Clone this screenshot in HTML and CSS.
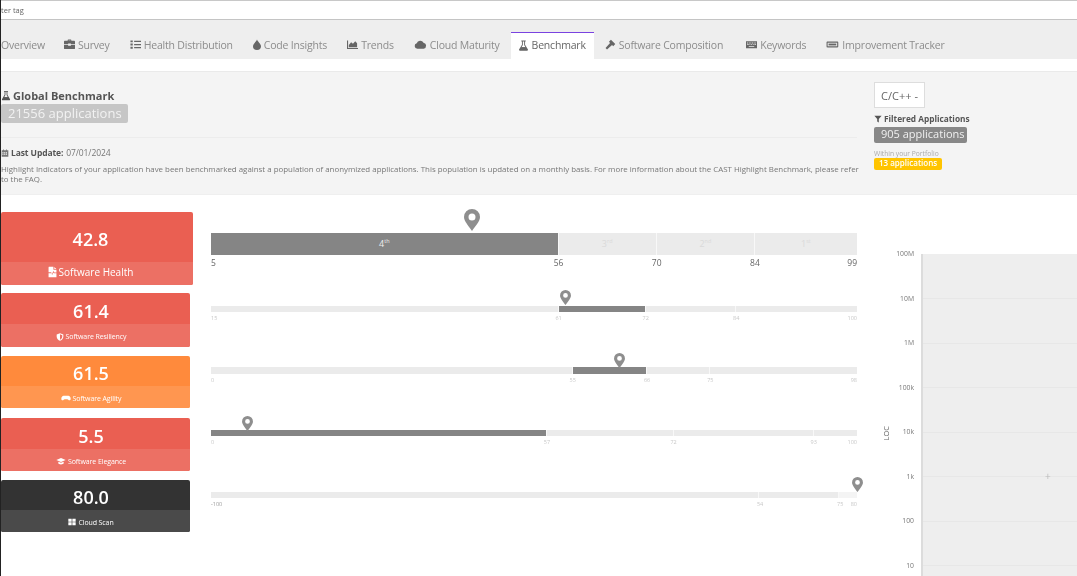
FILE: index.html
```html
<!DOCTYPE html>
<html lang="en">
<head>
<meta charset="utf-8">
<title>Benchmark</title>
<link rel="stylesheet" href="styles.css">
</head>
<body>
<svg class="defs" width="0" height="0" aria-hidden="true">
  <symbol id="i-flask" viewBox="0 0 12 12"><path d="M3.6 .6h4.8v1H7.7v3.6l3 5a1 1 0 0 1-.9 1.6H2.2a1 1 0 0 1-.9-1.6l3-5V1.600H3.600z M5.300 1.600v3.900L3.800 8h4.400L6.700 5.500V1.600z" fill-rule="evenodd"/><path d="M3.800 8h4.400l1.800 3H2z"/></symbol>
  <symbol id="i-case" viewBox="0 0 12 12"><path d="M4 2V1.300C4 .9 4.300 .6 4.700 .6h2.600C7.700 .6 8 .9 8 1.300V2h3c.5 0 1 .4 1 1v2.500H7.500V5h-3v.5H0V3c0-.6.500-1 1-1zM5 2h2v-.5H5zM0 6.300h4.500v1h3v-1H12V10c0 .6-.5 1-1 1H1c-.5 0-1-.4-1-1z"/></symbol>
  <symbol id="i-tasks" viewBox="0 0 12 12"><path d="M4.500 2h7.500v1.300H4.500zM4.500 5.400h7.500v1.300H4.500zM4.500 8.800h7.500v1.300H4.500zM.5 1.500h2.500v2H.5zM.5 5h2.500v2H.5zM.5 8.500h2.500v2H.5z"/></symbol>
  <symbol id="i-drop" viewBox="0 0 9 12"><path d="M4.500 .3C5 2.500 9 5 9 8a4.500 4.100 0 0 1-9 0C0 5 4 2.500 4.500 .3z"/></symbol>
  <symbol id="i-chart" viewBox="0 0 12 12"><path d="M0 1.500h1.200v8.300H12V11H0z"/><path d="M2 9l0-2.500 2.500-3 2 1.800L9 2.500l2 2v4.500z"/></symbol>
  <symbol id="i-cloud" viewBox="0 0 13 12"><path d="M3 10.500a3 3 0 0 1-.6-5.900A4 4 0 0 1 9.800 4 3.300 3.300 0 0 1 10 10.500z"/></symbol>
  <symbol id="i-gavel" viewBox="0 0 12 12"><path d="M6.500 .8l4.700 4.700-2.300 2.300-1.200-1.200L2.200 11.500.6 9.900l4.900-5.500-1.200-1.300z"/></symbol>
  <symbol id="i-key" viewBox="0 0 12 12"><path fill-rule="evenodd" d="M0 2.500h12v7.500H0zM1.200 3.800v1h1v-1zM3 3.800v1h1v-1zM4.800 3.800v1h1v-1zM6.600 3.800v1h1v-1zM8.400 3.800v1h1v-1zM10.200 3.800v1h.7v-1zM1.200 5.600v1h1.800v-1zM3.800 5.600v1h1v-1zM5.600 5.600v1h1v-1zM7.400 5.600v1h1v-1zM9.200 5.600v1h1.700v-1zM3 7.500v1h6v-1z"/></symbol>
  <symbol id="i-batt" viewBox="0 0 13 12"><path fill-rule="evenodd" d="M1 2.800h10.800c.5 0 1 .5 1 1v4.400c0 .5-.5 1-1 1H1c-.5 0-1-.5-1-1V3.800c0-.5.5-1 1-1zM1.200 4v4h10.400V4z"/><path d="M2.200 5h8.400v2H2.200z"/></symbol>
  <symbol id="i-cal" viewBox="0 0 12 12"><path fill-rule="evenodd" d="M1 2h2V.6h1.300V2h3.400V.6H9V2h2v9.500H1zM2 5v1.300h1.800V5zM4.600 5v1.300h1.800V5zM7.300 5v1.300H9V5zM2 7.200v1.300h1.800V7.200zM4.600 7.200v1.300h1.800V7.200zM7.300 7.200v1.300H9V7.200z"/></symbol>
  <symbol id="i-filter" viewBox="0 0 12 12"><path d="M.6 1h10.800L7.200 6v5.400L4.800 9.600V6z"/></symbol>
  <symbol id="i-file" viewBox="0 0 12 12"><path d="M2 .3h5v3.300h3.300v3H8L7 5 5.500 8.300 4.500 6.300H1.700V1zM8 .5l2.200 2.300H8zM1.700 7.300h3.300l.5 2 1.600-2.700.5.700h2.700V11.700H1.700z"/></symbol>
  <symbol id="i-shield" viewBox="0 0 12 12"><path fill-rule="evenodd" d="M6 .3l5 2v3c0 3-2.500 5.500-5 6.400C3.500 10.800 1 8.300 1 5.300v-3zM6 2v8.200c1.800-.8 3.400-2.700 3.400-4.900V3.400z"/></symbol>
  <symbol id="i-car" viewBox="0 0 14 12"><path d="M3.500 2.500h7c2 0 3.500 2 3.500 4.500 0 1.500-.7 2.500-1.800 2.500-1.500 0-2-1.800-3.200-1.800H5c-1.200 0-1.700 1.800-3.200 1.800C.7 9.500 0 8.500 0 7c0-2.500 1.500-4.500 3.500-4.500z"/></symbol>
  <symbol id="i-cap" viewBox="0 0 14 12"><path d="M7 1.500l7 3-7 3-7-3z"/><path d="M3 7l4 1.700L11 7v2.500c0 1-2 1.700-4 1.700s-4-.7-4-1.700z"/></symbol>
  <symbol id="i-grid" viewBox="0 0 12 12"><path d="M.5 1h5v4.500h-5zM6.500 1h5v4.500h-5zM.5 6.500h5V11h-5zM6.500 6.500h5V11h-5z"/></symbol>
  <symbol id="i-pin" viewBox="0 0 16 22"><path fill-rule="evenodd" d="M8 0a8 8 0 0 1 8 8c0 4.500-5 9.500-8 14C5 17.500 0 12.500 0 8a8 8 0 0 1 8-8zM8 4.500a3.500 3.500 0 1 0 0 7 3.500 3.500 0 0 0 0-7z"/></symbol>
</svg>

<div class="search">ter tag</div>

<nav class="tabs">
  <a class="tab tab-first">Overview</a>
  <a class="tab"><svg class="ico"><use href="#i-case"/></svg>Survey</a>
  <a class="tab"><svg class="ico"><use href="#i-tasks"/></svg>Health Distribution</a>
  <a class="tab"><svg class="ico ico-narrow"><use href="#i-drop"/></svg>Code Insights</a>
  <a class="tab"><svg class="ico"><use href="#i-chart"/></svg>Trends</a>
  <a class="tab"><svg class="ico ico-wide"><use href="#i-cloud"/></svg>Cloud Maturity</a>
  <a class="tab tab-active"><svg class="ico"><use href="#i-flask"/></svg>Benchmark</a>
  <a class="tab tab-comp"><svg class="ico"><use href="#i-gavel"/></svg>Software Composition</a>
  <a class="tab"><svg class="ico"><use href="#i-key"/></svg>Keywords</a>
  <a class="tab"><svg class="ico ico-wide"><use href="#i-batt"/></svg>Improvement Tracker</a>
</nav>

<header class="panel">
  <div class="panel-main">
    <div class="panel-top">
      <h1 class="title"><svg class="ico-title"><use href="#i-flask"/></svg>Global Benchmark</h1>
      <span class="badge-global">21556 applications</span>
    </div>
    <p class="update"><svg class="ico-small"><use href="#i-cal"/></svg><b>Last Update:</b> 07/01/2024</p>
    <p class="desc">Highlight Indicators of your application have been benchmarked against a population of anonymized applications. This population is updated on a monthly basis. For more information about the CAST Highlight Benchmark, please refer to the FAQ.</p>
  </div>
  <aside class="panel-side">
    <button class="lang">C/C++ -</button>
    <p class="filtered"><svg class="ico-small"><use href="#i-filter"/></svg>Filtered Applications</p>
    <span class="badge-filtered">905 applications</span>
    <p class="within">Within your Portfolio</p>
    <span class="badge-portfolio">13 applications</span>
  </aside>
</header>

<main class="content">
  <section class="cards">
    <article class="card card-main red">
      <div class="card-value">42.8</div>
      <div class="card-label"><svg class="ico-card"><use href="#i-file"/></svg>Software Health</div>
    </article>
    <article class="card card-res red">
      <div class="card-value">61.4</div>
      <div class="card-label"><svg class="ico-small"><use href="#i-shield"/></svg>Software Resiliency</div>
    </article>
    <article class="card card-agi orange">
      <div class="card-value">61.5</div>
      <div class="card-label"><svg class="ico-small ico-w"><use href="#i-car"/></svg>Software Agility</div>
    </article>
    <article class="card card-ele red">
      <div class="card-value">5.5</div>
      <div class="card-label"><svg class="ico-small ico-w"><use href="#i-cap"/></svg>Software Elegance</div>
    </article>
    <article class="card dark">
      <div class="card-value">80.0</div>
      <div class="card-label"><svg class="ico-small"><use href="#i-grid"/></svg>Cloud Scan</div>
    </article>
  </section>

  <section class="gauges">
    <div class="gauge gauge-main">
      <svg class="pin pin-big" style="left:40.35%"><use href="#i-pin"/></svg>
      <div class="bar bar-big">
        <div class="seg on" style="width:53.8%">4<sup>th</sup></div>
        <div class="seg" style="width:15.2%">3<sup>rd</sup></div>
        <div class="seg" style="width:15.2%">2<sup>nd</sup></div>
        <div class="seg" style="width:15.8%">1<sup>st</sup></div>
      </div>
      <div class="axis axis-big">
        <span class="start" style="left:0">5</span>
        <span style="left:53.8%">56</span>
        <span style="left:69%">70</span>
        <span style="left:84.2%">84</span>
        <span class="end" style="left:100%">99</span>
      </div>
    </div>

    <div class="gauge g-res">
      <svg class="pin" style="left:54.9%"><use href="#i-pin"/></svg>
      <div class="bar">
        <div class="seg" style="width:53.8%"></div>
        <div class="seg on" style="width:13.5%"></div>
        <div class="seg" style="width:14%"></div>
        <div class="seg" style="width:18.7%"></div>
      </div>
      <div class="axis">
        <span class="start" style="left:0">15</span>
        <span style="left:53.800%">61</span>
        <span style="left:67.3%">72</span>
        <span style="left:81.3%">84</span>
        <span class="end" style="left:100%">100</span>
      </div>
    </div>

    <div class="gauge g-agi">
      <svg class="pin" style="left:63.2%"><use href="#i-pin"/></svg>
      <div class="bar bar-mid">
        <div class="seg" style="width:56%"></div>
        <div class="seg on" style="width:11.5%"></div>
        <div class="seg" style="width:9.800%"></div>
        <div class="seg" style="width:22.7%"></div>
      </div>
      <div class="axis">
        <span class="start" style="left:0">0</span>
        <span style="left:56%">55</span>
        <span style="left:67.500%">66</span>
        <span style="left:77.3%">75</span>
        <span class="end" style="left:100%">98</span>
      </div>
    </div>

    <div class="gauge g-ele">
      <svg class="pin" style="left:5.6%"><use href="#i-pin"/></svg>
      <div class="bar">
        <div class="seg on" style="width:52%"></div>
        <div class="seg" style="width:19.6%"></div>
        <div class="seg" style="width:21.7%"></div>
        <div class="seg" style="width:6.7%"></div>
      </div>
      <div class="axis">
        <span class="start" style="left:0">0</span>
        <span style="left:52%">57</span>
        <span style="left:71.6%">72</span>
        <span style="left:93.3%">93</span>
        <span class="end" style="left:100%">100</span>
      </div>
    </div>

    <div class="gauge g-cloud">
      <svg class="pin" style="left:100%"><use href="#i-pin"/></svg>
      <div class="bar">
        <div class="seg" style="width:84.800%"></div>
        <div class="seg" style="width:12.4%"></div>
        <div class="seg seg-pale" style="width:2.800%"></div>
      </div>
      <div class="axis">
        <span class="start strong" style="left:0">-100</span>
        <span style="left:85%">54</span>
        <span style="left:97.400%">75</span>
        <span class="end" style="left:100%">80</span>
      </div>
    </div>
  </section>

  <section class="chart">
    <div class="loc"><span>LOC</span></div>
    <div class="ticks">
      <span>100M</span><span>10M</span><span>1M</span><span>100k</span><span>10k</span><span>1k</span><span>100</span><span>10</span>
    </div>
    <div class="plot">
      <i></i><i></i><i></i><i></i><i></i><i></i><i></i>
      <b class="point">+</b>
    </div>
  </section>
</main>
</body>
</html>
```

FILE: styles.css
```css
* { box-sizing: border-box; }
html, body { margin: 0; height: 576px; overflow: hidden; }
body {
  font-family: "Open Sans", "Liberation Sans", sans-serif;
  background: #fff;
  color: #555;
  border-left: 1px solid #222;
  filter: blur(.45px);
}
.defs { position: absolute; }
p, h1 { margin: 0; }

.search {
  height: 20px;
  border-top: 1px solid #c8c8c8;
  border-bottom: 1px solid #c4c4c4;
  font-size: 7.500px;
  line-height: 19px;
  color: #666;
}

.tabs {
  height: 39px;
  background: #eee;
  display: flex;
  align-items: flex-end;
  font-size: 10.500px;
  letter-spacing: -.2px;
  color: #8c8c8c;
}
.tab {
  height: 27px;
  padding: 0 10px 2px;
  display: flex;
  align-items: center;
  white-space: nowrap;
}
.tab-first { padding: 0 9px 2px 0; }
.tab-comp { padding-right: 13px; }
.tab-active {
  background: #fff;
  border-top: 1px solid #7a43e0;
  color: #666;
  padding: 0 8px 2px 7px;
  margin: 0 1px;
}
.ico { width: 11px; height: 11px; margin-right: 3px; fill: #666; flex: none; }
.ico-narrow { width: 8px; }
.ico-wide { width: 13px; }

.panel {
  margin-top: 12px;
  border-top: 1px solid #eaeaea;
  height: 124px;
  background: #f4f4f4;
  display: flex;
  border-bottom: 1px solid #efefef;
}
.panel-main { width: 856px; padding-top: 17px; }
.panel-top { height: 49px; border-bottom: 1px solid #ececec; }
.title {
  font-size: 11px;
  font-weight: 700;
  line-height: 13px;
  color: #555;
  display: flex;
  align-items: center;
}
.ico-title { width: 10px; height: 11px; margin-right: 2px; fill: #555; }
.badge-global {
  display: block;
  margin-top: 2px;
  width: 127px;
  height: 19px;
  background: #c6c6c6;
  color: #f2f2f2;
  font-size: 13px;
  line-height: 18px;
  border-radius: 2px;
  padding-left: 7px;
  white-space: nowrap;
}
.update {
  margin-top: 9px;
  font-size: 8.500px;
  letter-spacing: -.1px;
  line-height: 12px;
  color: #777;
  display: flex;
  align-items: center;
}
.update b { color: #555; margin-right: 3px; }
.ico-small { width: 8px; height: 8px; margin-right: 2px; fill: currentColor; flex: none; }
.ico-w { width: 10px; }
.desc {
  margin: 6px -4px 0 0;
  font-size: 7.900px;
  line-height: 9.500px;
  color: #777;
}

.panel-side { margin-left: 17px; padding-top: 10px; display: flex; flex-direction: column; align-items: flex-start; }
.lang {
  width: 51px;
  height: 26px;
  background: #fff;
  border: 1px solid #ddd;
  font: 11px "Open Sans", sans-serif;
  color: #666;
  padding: 0;
}
.filtered {
  margin-top: 5px;
  font-size: 8.300px;
  font-weight: 700;
  line-height: 12px;
  display: flex;
  align-items: center;
  color: #555;
  white-space: nowrap;
}
.badge-filtered {
  margin-top: 2px;
  width: 93px;
  height: 16px;
  background: #888;
  color: #f0f0f0;
  font-size: 11px;
  line-height: 14px;
  padding-left: 7px;
  border-radius: 2px;
  white-space: nowrap;
}
.within { margin-top: 6px; font-size: 6.700px; line-height: 9px; color: #aaa; white-space: nowrap; }
.badge-portfolio {
  width: 68px;
  height: 12px;
  background: #ffc400;
  color: #fff;
  font-size: 8px;
  font-weight: 600;
  line-height: 10px;
  padding-left: 5px;
  border-radius: 2px;
  white-space: nowrap;
}

.content { display: flex; align-items: flex-start; }
.cards { width: 192px; padding-top: 17px; flex: none; }
.card { width: 189px; height: 52px; margin-bottom: 10px; border-radius: 2px; overflow: hidden; color: #fff; display: flex; flex-direction: column; }
.card-main { width: 192px; height: 73px; margin-bottom: 8px; }
.card-res { height: 54px; margin-bottom: 9px; }
.card-agi { margin-bottom: 10px; }
.card-ele { height: 53px; margin-bottom: 9px; }
.card-value { flex: 1; display: flex; align-items: center; justify-content: center; font-size: 18px; font-weight: 600; padding: 4px 9px 0 0; }
.card-label {
  height: 22px;
  display: flex;
  align-items: center;
  justify-content: center;
  font-size: 7px;
  letter-spacing: -.1px;
  padding: 2px 9px 0 0;
  flex: none;
}
.card-res .card-label { height: 23px; }
.card-main .card-label { font-size: 10px; height: 23px; padding: 0 14px 3px 0; letter-spacing: 0; }
.card-main .card-value { padding: 4px 13px 0 0; }
.ico-card { width: 11px; height: 12px; fill: #fff; margin-right: 1px; }
.red { background: #ea5f52; }
.red .card-label { background: #ec7064; }
.orange { background: #ff8a3c; }
.orange .card-label { background: #ff9650; }
.dark { background: #333; }
.dark .card-label { background: #4a4a4a; }

.gauges { width: 646px; margin-left: 18px; flex: none; }
.gauge { position: relative; }
.gauge-main { padding-top: 38px; height: 98px; }
.g-res { height: 63px; padding-top: 13px; }
.g-agi { height: 63px; padding-top: 11px; }
.g-ele { height: 62px; padding-top: 11px; }
.g-cloud { padding-top: 11px; height: 30px; }
.pin { position: absolute; width: 11px; height: 15px; margin-left: -5.500px; top: -3px; fill: #8e8e8e; }
.pin-big { width: 16px; height: 22px; margin-left: -8px; top: 14px; }
.g-cloud .pin { top: -4px; }
.bar { height: 6px; display: flex; background: #ebebeb; border-radius: 1px; }
.bar-big { height: 22px; }
.bar-mid { height: 7px; }
.seg {
  height: 100%;
  background: #ebebeb;
  border-right: 1px solid #f8f8f8;
  text-align: center;
  font-size: 9px;
  line-height: 22px;
  color: #dadada;
}
.seg:last-child { border-right: 0; }
.seg.on { background: #858585; color: #eee; }
.seg-pale { background: #f4f4f4; }
.seg sup { font-size: 5.500px; line-height: 0; }
.axis { position: relative; height: 10px; margin-top: .5px; font-size: 5.500px; line-height: 10px; color: #c8c8c8; }
.axis span { position: absolute; transform: translateX(-50%); }
.axis .start { transform: none; }
.axis .end { transform: translateX(-100%); }
.axis .strong { color: #999; }
.axis-big { font-size: 8.500px; color: #666; height: 14px; margin-top: 3px; }

.chart { flex: 1; position: relative; display: flex; padding-top: 59px; height: 382px; overflow: hidden; }
.loc { width: 36px; display: flex; align-items: center; }
.loc span { writing-mode: vertical-rl; transform: rotate(180deg); font-size: 7.500px; margin: 172px 0 0 24px; color: #666; align-self: flex-start; }
.ticks { width: 21px; display: flex; flex-direction: column; align-items: flex-end; font-size: 6.800px; color: #777; line-height: 10px; margin-top: -5px; }
.ticks span { height: 44.500px; flex: none; }
.plot { flex: 1; margin-left: 7px; background: #eee; border-left: 2px solid #dcdcdc; height: 330px; position: relative; padding-top: 44px; }
.plot i { display: block; height: 44.500px; border-top: 1px solid #e7e7e7; }
.point { position: absolute; left: 122px; top: 216px; font-size: 10px; font-weight: 400; color: #bbb; line-height: 12px; }
```
